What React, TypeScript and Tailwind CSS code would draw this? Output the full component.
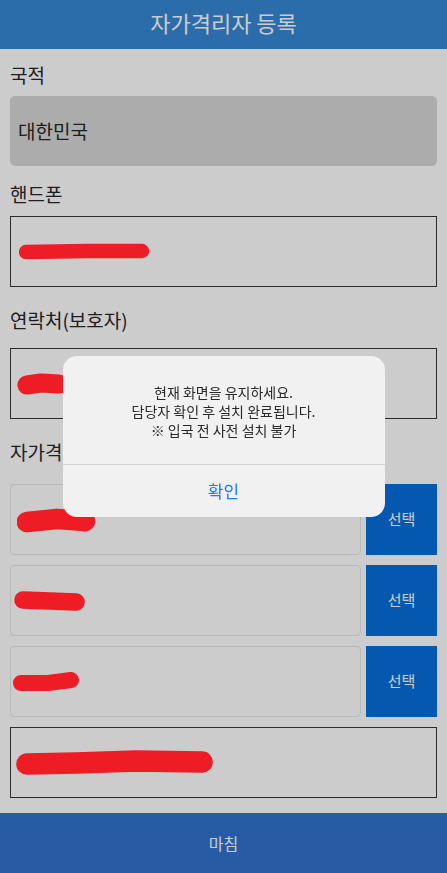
import React from 'react';

const font = { fontFamily: '"Noto Sans CJK KR", "Noto Sans", sans-serif' };

// redaction scribble drawn over personal data (sits above the dim layer)
function Scribble({ w, h, d }: { w: number; h: number; d: string }) {
  return (
    <svg width={w} height={h} viewBox={`0 0 ${w} ${h}`} className="block relative z-20">
      <path d={d} fill="none" stroke="#ee1c25" strokeWidth={h * 0.8} strokeLinecap="round" strokeLinejoin="round" />
    </svg>
  );
}

function Label({ children, className }: { children: React.ReactNode; className: string }) {
  return <div className={`h-[26px] text-[19px] leading-[26px] text-[#262626] ${className}`}>{children}</div>;
}

function SelectRow({ scribble, pad }: { scribble: React.ReactNode; pad: string }) {
  return (
    <div className="flex gap-[5px] h-[71px]">
      <div className={`flex-1 rounded-[4px] border border-[#e6e6e6] flex items-center ${pad}`}>{scribble}</div>
      <button className="w-[71px] bg-[#066fdc] text-white text-[15px]">선택</button>
    </div>
  );
}

export default function App() {
  return (
    <div className="relative min-h-screen bg-white" style={font}>
      {/* Header */}
      <header className="h-[49px] bg-[#3688d6] flex items-center justify-center pb-[4px]">
        <h1 className="text-white text-[22px] font-normal">자가격리자 등록</h1>
      </header>

      <main className="px-[10px] pb-[15px]">
        <Label className="mt-[13px] mb-[8px]">국적</Label>
        <div className="h-[70px] rounded-[5px] bg-[#d7d7d7] flex items-center px-[8px] text-[19px] text-[#262626]">대한민국</div>

        <Label className="mt-[15px] mb-[9px]">핸드폰</Label>
        <div className="h-[71px] border border-[#383838] flex items-center pl-[6px]">
          <Scribble w={134} h={18} d="M9 9 L70 8 L125 8" />
        </div>

        <Label className="mt-[20px] mb-[15px]">연락처(보호자)</Label>
        <div className="h-[71px] border border-[#383838] flex items-center pl-[6px]">
          <Scribble w={52} h={24} d="M10 13 L24 11 L42 12" />
        </div>

        <Label className="mt-[20px] mb-[19px]">자가격리 장소</Label>
        <div className="flex flex-col gap-[10px]">
          <SelectRow pad="pl-[6px]" scribble={<Scribble w={79} h={26} d="M10 15 L40 12 L68 14" />} />
          <SelectRow pad="pl-[3px]" scribble={<Scribble w={72} h={22} d="M9 10 L36 11 L62 12" />} />
          <SelectRow pad="pl-[2px]" scribble={<Scribble w={67} h={20} d="M8 11 L35 11 L58 8" />} />
        </div>
        <div className="mt-[10px] h-[71px] border border-[#383838] flex items-center pl-[5px]">
          <Scribble w={198} h={27} d="M11 15 L60 14 L120 12 L186 13" />
        </div>
      </main>

      <footer className="h-[60px] bg-[#3174ce] flex items-center justify-center text-white text-[16px]">마침</footer>

      {/* Dim layer */}
      <div className="fixed inset-0 z-10 bg-black/20" />

      {/* Alert */}
      <div className="fixed inset-0 z-30 flex items-center justify-center">
        <div className="w-[322px] rounded-[14px] bg-[#f1f1f1] overflow-hidden">
          <div className="h-[108px] flex flex-col items-center justify-center text-[14px] leading-[19px] text-[#2a2a2a] pt-[2px]">
            <p>현재 화면을 유지하세요.</p>
            <p>담당자 확인 후 설치 완료됩니다.</p>
            <p>※ 입국 전 사전 설치 불가</p>
          </div>
          <button className="w-full h-[53px] border-t border-[#d2d2d2] text-[17px] text-[#1a7ef0]">확인</button>
        </div>
      </div>
    </div>
  );
}
